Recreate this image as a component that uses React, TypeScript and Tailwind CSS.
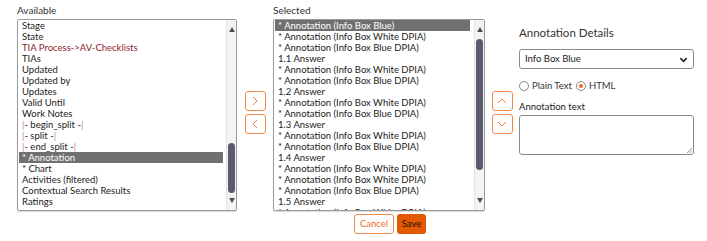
import React from 'react';

const available: { text: string; kind?: string }[] = [
  { text: 'Stage' },
  { text: 'State' },
  { text: 'TIA Process->AV-Checklists', kind: 'red' },
  { text: 'TIAs' },
  { text: 'Updated' },
  { text: 'Updated by' },
  { text: 'Updates' },
  { text: 'Valid Until' },
  { text: 'Work Notes' },
  { text: 'begin_split', kind: 'split' },
  { text: 'split', kind: 'split' },
  { text: 'end_split', kind: 'split' },
  { text: '* Annotation', kind: 'sel' },
  { text: '* Chart' },
  { text: 'Activities (filtered)' },
  { text: 'Contextual Search Results' },
  { text: 'Ratings' },
];

const W = '* Annotation (Info Box White DPIA)';
const B = '* Annotation (Info Box Blue DPIA)';
const selected = [
  '* Annotation (Info Box Blue)',
  W, B, '1.1 Answer',
  W, B, '1.2 Answer',
  W, B, '1.3 Answer',
  W, B, '1.4 Answer',
  W, W, B, '1.5 Answer',
  W,
];

const Scrollbar = ({ thumbTop, thumbHeight }: { thumbTop: number; thumbHeight: number }) => (
  <div className="relative w-[10px] h-full bg-[#f3f3f5] border-l border-[#e4e4e8]">
    <div className="absolute top-[7px] left-[2px] w-0 h-0 border-l-[3px] border-r-[3px] border-b-[5px] border-l-transparent border-r-transparent border-b-[#505050]"></div>
    <div
      className="absolute left-[1px] w-[7px] rounded-full bg-[#5c5b6e]"
      style={{ top: thumbTop, height: thumbHeight }}
    ></div>
    <div className="absolute bottom-[7px] left-[2px] w-0 h-0 border-l-[3px] border-r-[3px] border-t-[5px] border-l-transparent border-r-transparent border-t-[#505050]"></div>
  </div>
);

const ArrowBtn = ({ dir }: { dir: 'right' | 'left' | 'up' | 'down' }) => {
  const d = {
    right: 'M4 2l4 4-4 4',
    left: 'M8 2l-4 4 4 4',
    up: 'M2 8l4-4 4 4',
    down: 'M2 4l4 4 4-4',
  }[dir];
  return (
    <button className="w-[21px] h-[20px] border border-[#f08a4b] rounded-[3px] bg-white flex items-center justify-center">
      <svg width="12" height="12" viewBox="0 0 12 12" fill="none" stroke="#f0823e" strokeWidth="1">
        <path d={d} />
      </svg>
    </button>
  );
};

export default function App() {
  return (
    <div className="w-[707px] h-[241px] bg-white text-[#222] font-['Lato','Open_Sans',sans-serif] text-[9.5px] pl-[17px] pt-[4px]">
      <div className="flex">
        {/* Available */}
        <div className="w-[220px]">
          <div className="h-[15px] leading-[13px] text-[10px] text-[#333]">Available</div>
          <div className="h-[192px] border border-[#9a9a9a] rounded-[2px] flex shadow-[0_1px_1px_rgba(0,0,0,0.15)]">
            <div className="flex-1 overflow-hidden pt-[0px] pl-[1px] pr-[3px]">
              {available.map((it, i) => (
                <div
                  key={i}
                  className={`h-[11px] leading-[12px] pl-[3px] whitespace-nowrap ${
                    it.kind === 'sel' ? 'bg-[#707070] text-white' : it.kind === 'red' ? 'text-[#8c1f2f]' : ''
                  }`}
                >
                  {it.kind === 'split' ? (
                    <>
                      <span className="text-[#c67cb0]">|</span>- {it.text} -<span className="text-[#c67cb0]">|</span>
                    </>
                  ) : (
                    it.text
                  )}
                </div>
              ))}
            </div>
            <Scrollbar thumbTop={123} thumbHeight={50} />
          </div>
        </div>

        <div className="w-[36px] flex flex-col items-center justify-center gap-[3px] pt-[10px]">
          <ArrowBtn dir="right" />
          <ArrowBtn dir="left" />
        </div>

        {/* Selected */}
        <div className="w-[212px]">
          <div className="h-[15px] leading-[13px] text-[10px] text-[#333]">Selected</div>
          <div className="h-[192px] border border-[#9a9a9a] rounded-[2px] flex shadow-[0_1px_1px_rgba(0,0,0,0.15)]">
            <div className="flex-1 overflow-hidden pl-[1px] pr-[4px]">
              {selected.map((t, i) => (
                <div
                  key={i}
                  className={`h-[11px] leading-[12px] pl-[3px] whitespace-nowrap ${
                    i === 0 ? 'bg-[#707070] text-white' : ''
                  }`}
                >
                  {t}
                </div>
              ))}
            </div>
            <Scrollbar thumbTop={19} thumbHeight={131} />
          </div>
        </div>

        <div className="w-[34px] flex flex-col items-center justify-center gap-[3px] pt-[10px]">
          <ArrowBtn dir="up" />
          <ArrowBtn dir="down" />
        </div>

        {/* Annotation details */}
        <div className="w-[175px] pt-[21px]">
          <div className="text-[11.5px] leading-[16px] text-[#333]">Annotation Details</div>
          <div className="mt-[8px] h-[20px] border border-[#8a8a8a] rounded-[3px] flex items-center justify-between pl-[5px] pr-[5px] text-[9.5px] text-[#222]">
            <span>Info Box Blue</span>
            <svg width="9" height="9" viewBox="0 0 10 10" fill="none" stroke="#222" strokeWidth="1.8">
              <path d="M1.5 3.5l3.5 3.5 3.5-3.5" />
            </svg>
          </div>
          <div className="mt-[11px] flex items-center h-[12px] text-[9.5px] text-[#333]">
            <span className="w-[10px] h-[10px] rounded-full border border-[#8a8a8a] bg-white"></span>
            <span className="ml-[3px]">Plain Text</span>
            <span className="ml-[4px] w-[10px] h-[10px] rounded-full border border-[#8a8a8a] bg-white flex items-center justify-center">
              <span className="w-[4px] h-[4px] rounded-full bg-[#ec6a1c]"></span>
            </span>
            <span className="ml-[3px]">HTML</span>
          </div>
          <div className="mt-[9px] text-[9.5px] leading-[12px] text-[#222]">Annotation text</div>
          <div className="relative mt-[2px] h-[40px] border border-[#8a8a8a] rounded-[3px]">
            <svg className="absolute right-[1px] bottom-[1px]" width="6" height="6" viewBox="0 0 6 6" stroke="#777" strokeWidth="0.8">
              <path d="M6 1L1 6M6 3.5L3.5 6" />
            </svg>
          </div>
        </div>
      </div>

      <div className="flex gap-[3px] pl-[337px] mt-[3px]">
        <button className="w-[40px] h-[20px] px-0 border border-[#f08a4b] rounded-[3px] bg-white text-[#f06a1e] text-[9.5px] leading-none">
          Cancel
        </button>
        <button className="w-[29px] h-[20px] px-0 rounded-[3px] bg-[#e35a06] text-[#2a1200] text-[9.5px] leading-none">
          Save
        </button>
      </div>
    </div>
  );
}
